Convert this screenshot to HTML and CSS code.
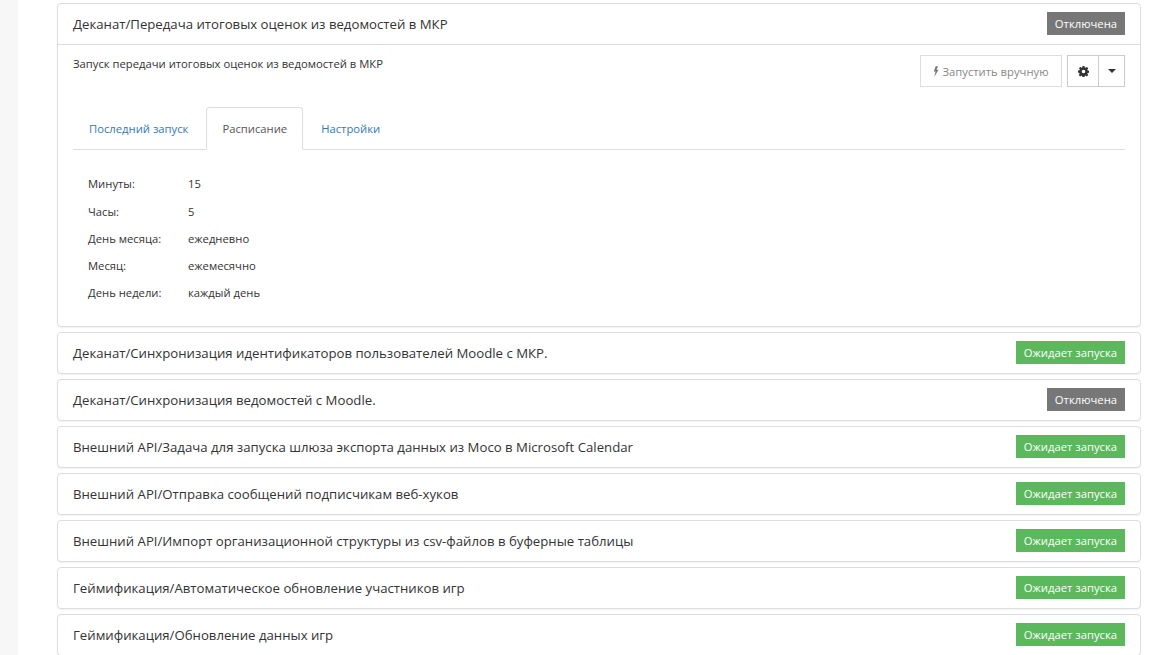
FILE: index.html
```html
<!DOCTYPE html>
<html lang="ru">
<head>
<meta charset="utf-8">
<title>Задачи</title>
<link rel="stylesheet" href="styles.css">
</head>
<body>
<aside class="side"></aside>
<main class="list">
  <section class="panel">
    <header class="head head-open"><span class="title">Деканат/Передача итоговых оценок из ведомостей в МКР</span><span class="badge off">Отключена</span></header>
    <div class="body">
      <div class="top">
        <p class="desc">Запуск передачи итоговых оценок из ведомостей в МКР</p>
        <div class="actions">
          <button class="btn run"><svg class="bolt" viewBox="0 0 8 14" width="6" height="11"><path d="M3.6 0 1 7h2.400L1.800 14 7.400 4.800H4.600L6.800 0z" fill="#777"/></svg> Запустить вручную</button>
          <div class="group">
            <button class="btn cog"><svg viewBox="0 0 16 16" width="11" height="11"><path fill-rule="evenodd" fill="#333" d="M6.6 0h2.800l.4 2.200 1.200.5L12.900 1.400l2 2-1.300 1.900.5 1.200 2.200.4v2.800l-2.200.4-.5 1.200 1.300 1.900-2 2-1.900-1.300-1.200.5-.4 2.200H6.600l-.4-2.200-1.200-.5-1.900 1.300-2-2 1.300-1.900-.5-1.200L0 9.400V6.600l2.200-.4.500-1.200L1.400 3.100l2-2L5 2.700l1.200-.5zM8 5.400a2.600 2.600 0 1 0 0 5.200 2.600 2.600 0 0 0 0-5.200z"/></svg></button>
            <button class="btn caret-btn"><span class="caret"></span></button>
          </div>
        </div>
      </div>
      <nav class="tabs">
        <a class="tab">Последний запуск</a>
        <a class="tab active">Расписание</a>
        <a class="tab">Настройки</a>
      </nav>
      <dl class="sched">
        <dt>Минуты:</dt><dd>15</dd>
        <dt>Часы:</dt><dd>5</dd>
        <dt>День месяца:</dt><dd>ежедневно</dd>
        <dt>Месяц:</dt><dd>ежемесячно</dd>
        <dt>День недели:</dt><dd>каждый день</dd>
      </dl>
    </div>
  </section>
  <section class="panel"><header class="head"><span class="title">Деканат/Синхронизация идентификаторов пользователей Moodle с МКР.</span><span class="badge wait">Ожидает запуска</span></header></section>
  <section class="panel"><header class="head"><span class="title">Деканат/Синхронизация ведомостей с Moodle.</span><span class="badge off">Отключена</span></header></section>
  <section class="panel"><header class="head"><span class="title">Внешний API/Задача для запуска шлюза экспорта данных из Moco в Microsoft Calendar</span><span class="badge wait">Ожидает запуска</span></header></section>
  <section class="panel"><header class="head"><span class="title">Внешний API/Отправка сообщений подписчикам веб-хуков</span><span class="badge wait">Ожидает запуска</span></header></section>
  <section class="panel"><header class="head"><span class="title">Внешний API/Импорт организационной структуры из csv-файлов в буферные таблицы</span><span class="badge wait">Ожидает запуска</span></header></section>
  <section class="panel"><header class="head"><span class="title">Геймификация/Автоматическое обновление участников игр</span><span class="badge wait">Ожидает запуска</span></header></section>
  <section class="panel"><header class="head"><span class="title">Геймификация/Обновление данных игр</span><span class="badge wait">Ожидает запуска</span></header></section>
</main>
</body>
</html>
```
FILE: styles.css
```css
* { box-sizing: border-box; }
html, body { height: 655px; overflow: hidden; }
body {
  margin: 0;
  display: flex;
  background: #fff;
  color: #333;
  font-family: "Open Sans", sans-serif;
  font-size: 11.25px;
}
.side { width: 18px; flex: none; background: #f7f7f7; }
.list { width: 1084px; margin-left: 39px; padding-top: 3px; flex: none; }
.panel {
  border: 1px solid #ddd;
  border-radius: 4px;
  margin-bottom: 5px;
  box-shadow: 0 1px 1px rgba(0,0,0,.05);
  background: #fff;
}
.head {
  height: 40px;
  padding: 0 15px;
  display: flex;
  align-items: center;
  justify-content: space-between;
}
.head-open { height: 41px; border-bottom: 1px solid #ddd; }
.title { font-size: 13.2px; }
.badge {
  height: 23px;
  line-height: 23px;
  padding: 0 8px;
  margin-bottom: 2px;
  color: #fff;
  font-size: 11.25px;
  white-space: nowrap;
}
.off { background: #777; }
.wait { background: #5cb85c; }
.body { padding: 11px 15px 20px; }
.top { display: flex; justify-content: space-between; align-items: flex-start; height: 51px; }
.desc { margin: 0; font-size: 11.25px; line-height: 16px; }
.actions { display: flex; gap: 5px; margin-top: -1px; }
.group { display: flex; }
.btn {
  height: 32px;
  background: #fff;
  border: 1px solid #ccc;
  font-family: inherit;
  font-size: 11.25px;
  color: #333;
  padding: 0;
  display: flex;
  align-items: center;
  justify-content: center;
}
.run { width: 142px; color: #888; border-color: #ddd; gap: 3px; }
.cog { width: 32px; }
.caret-btn { width: 26px; border-left: 0; }
.caret {
  width: 0; height: 0;
  border-left: 4px solid transparent;
  border-right: 4px solid transparent;
  border-top: 4px solid #333;
}
.tabs {
  display: flex;
  gap: 2px;
  border-bottom: 1px solid #ddd;
  height: 43px;
}
.tab {
  height: 43px;
  line-height: 42px;
  padding: 0 15px;
  color: #337ab7;
  border: 1px solid transparent;
  border-radius: 4px 4px 0 0;
}
.active {
  color: #555;
  background: #fff;
  border-color: #ddd #ddd #fff;
}
.sched {
  margin: 20.4px 0 0 15px;
  display: grid;
  grid-template-columns: 100px 1fr;
  grid-auto-rows: 27.2px;
  align-items: center;
}
.sched dt, .sched dd { margin: 0; font-weight: 400; }
```
